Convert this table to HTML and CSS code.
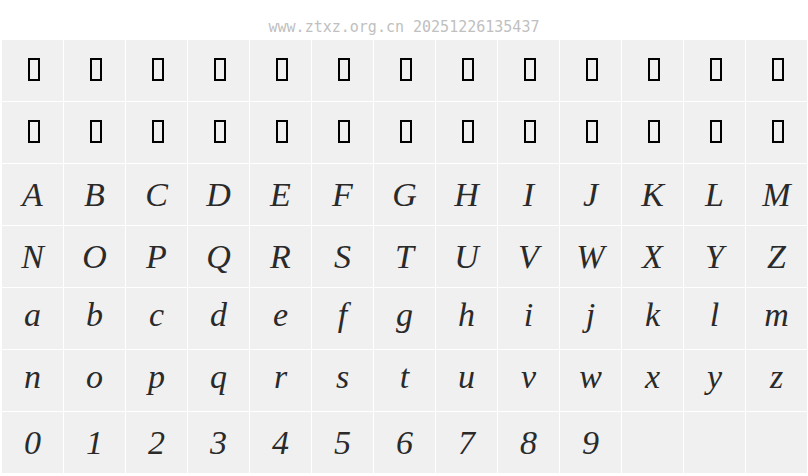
FILE: index.html
```html
<!DOCTYPE html>
<html>
<head>
<meta charset="utf-8">
<link rel="stylesheet" href="styles.css">
</head>
<body>
<div class="header">www.ztxz.org.cn 20251226135437</div>
<div class="grid">
<div class="row">
<div class="cell"><span class="tofu"></span></div><div class="cell"><span class="tofu"></span></div><div class="cell"><span class="tofu"></span></div><div class="cell"><span class="tofu"></span></div><div class="cell"><span class="tofu"></span></div><div class="cell"><span class="tofu"></span></div><div class="cell"><span class="tofu"></span></div><div class="cell"><span class="tofu"></span></div><div class="cell"><span class="tofu"></span></div><div class="cell"><span class="tofu"></span></div><div class="cell"><span class="tofu"></span></div><div class="cell"><span class="tofu"></span></div><div class="cell"><span class="tofu"></span></div>
</div>
<div class="row">
<div class="cell"><span class="tofu"></span></div><div class="cell"><span class="tofu"></span></div><div class="cell"><span class="tofu"></span></div><div class="cell"><span class="tofu"></span></div><div class="cell"><span class="tofu"></span></div><div class="cell"><span class="tofu"></span></div><div class="cell"><span class="tofu"></span></div><div class="cell"><span class="tofu"></span></div><div class="cell"><span class="tofu"></span></div><div class="cell"><span class="tofu"></span></div><div class="cell"><span class="tofu"></span></div><div class="cell"><span class="tofu"></span></div><div class="cell"><span class="tofu"></span></div>
</div>
<div class="row">
<div class="cell">A</div><div class="cell">B</div><div class="cell">C</div><div class="cell">D</div><div class="cell">E</div><div class="cell">F</div><div class="cell">G</div><div class="cell">H</div><div class="cell">I</div><div class="cell">J</div><div class="cell">K</div><div class="cell">L</div><div class="cell">M</div>
</div>
<div class="row">
<div class="cell">N</div><div class="cell">O</div><div class="cell">P</div><div class="cell">Q</div><div class="cell">R</div><div class="cell">S</div><div class="cell">T</div><div class="cell">U</div><div class="cell">V</div><div class="cell">W</div><div class="cell">X</div><div class="cell">Y</div><div class="cell">Z</div>
</div>
<div class="row lower">
<div class="cell">a</div><div class="cell">b</div><div class="cell">c</div><div class="cell">d</div><div class="cell">e</div><div class="cell">f</div><div class="cell">g</div><div class="cell">h</div><div class="cell">i</div><div class="cell">j</div><div class="cell">k</div><div class="cell">l</div><div class="cell">m</div>
</div>
<div class="row lower">
<div class="cell">n</div><div class="cell">o</div><div class="cell">p</div><div class="cell">q</div><div class="cell">r</div><div class="cell">s</div><div class="cell">t</div><div class="cell">u</div><div class="cell">v</div><div class="cell">w</div><div class="cell">x</div><div class="cell">y</div><div class="cell">z</div>
</div>
<div class="row">
<div class="cell">0</div><div class="cell">1</div><div class="cell">2</div><div class="cell">3</div><div class="cell">4</div><div class="cell">5</div><div class="cell">6</div><div class="cell">7</div><div class="cell">8</div><div class="cell">9</div><div class="cell"></div><div class="cell"></div><div class="cell"></div>
</div>
</div>
</body>
</html>
```

FILE: styles.css
```css
html, body {
  margin: 0;
  padding: 0;
  background: #ffffff;
}
body {
  width: 808px;
  height: 476px;
  overflow: hidden;
}
.header {
  height: 40px;
  box-sizing: border-box;
  padding-top: 19px;
  text-align: center;
  font-family: "DejaVu Sans Mono", "Liberation Mono", monospace;
  font-size: 15px;
  line-height: 17px;
  color: #c0c0c0;
}
.grid {
  display: grid;
  grid-template-columns: repeat(13, 61px);
  grid-auto-rows: 61px;
  gap: 1px;
  margin-left: 2px;
}
.row {
  display: contents;
}
.cell {
  background: #f0f0f0;
  display: flex;
  align-items: center;
  justify-content: center;
  font-family: "Liberation Serif", serif;
  font-style: italic;
  font-size: 34px;
  line-height: 1;
  color: #2a2a2a;
  box-sizing: border-box;
}
.lower .cell {
  padding-bottom: 7px;
}
.tofu {
  display: block;
  width: 12px;
  height: 23px;
  box-sizing: border-box;
  border: 2px solid #000;
  margin-left: 3px;
  margin-top: -2px;
}
```
